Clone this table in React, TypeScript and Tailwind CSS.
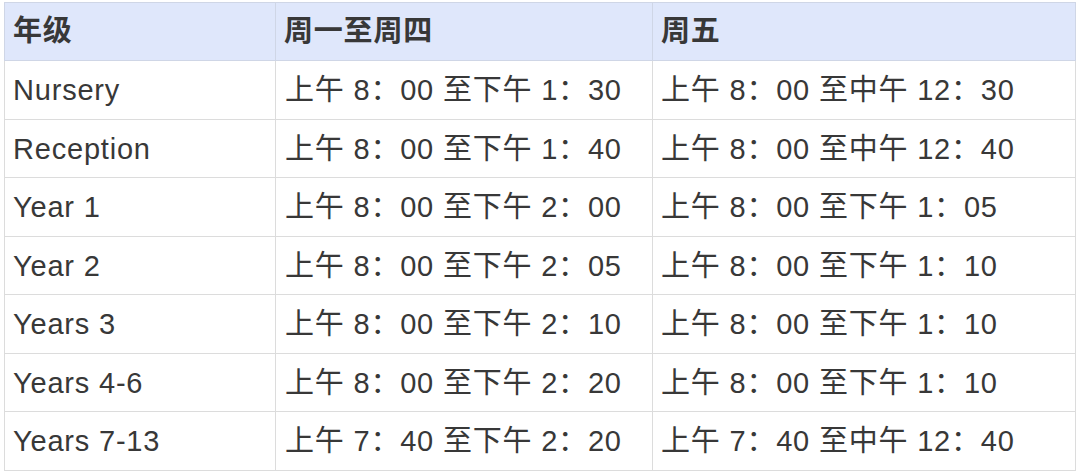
const rows = [
  ["Nursery", "上午 8：00 至下午 1：30", "上午 8：00 至中午 12：30"],
  ["Reception", "上午 8：00 至下午 1：40", "上午 8：00 至中午 12：40"],
  ["Year 1", "上午 8：00 至下午 2：00", "上午 8：00 至下午 1：05"],
  ["Year 2", "上午 8：00 至下午 2：05", "上午 8：00 至下午 1：10"],
  ["Years 3", "上午 8：00 至下午 2：10", "上午 8：00 至下午 1：10"],
  ["Years 4-6", "上午 8：00 至下午 2：20", "上午 8：00 至下午 1：10"],
  ["Years 7-13", "上午 7：40 至下午 2：20", "上午 7：40 至中午 12：40"],
];

export default function App() {
  return (
    <div
      className="w-[1080px] h-[474px] bg-white pl-[4px] pt-[2px] overflow-hidden"
      style={{ fontFamily: '"Liberation Sans", "Noto Sans CJK SC", sans-serif' }}
    >
      <table className="w-[1071px] border-collapse table-fixed text-[29px] tracking-[0.8px] text-[#383838]">
        <colgroup>
          <col className="w-[271px]" />
          <col className="w-[377px]" />
          <col className="w-[423px]" />
        </colgroup>
        <thead>
          <tr className="bg-[#dfe7fb]">
            <th className="h-[58px] border border-[#cfd6e6] pl-[8px] pt-[1px] text-left font-bold">年级</th>
            <th className="h-[58px] border border-[#cfd6e6] pl-[8px] pt-[1px] text-left font-bold">周一至周四</th>
            <th className="h-[58px] border border-[#cfd6e6] pl-[8px] pt-[1px] text-left font-bold">周五</th>
          </tr>
        </thead>
        <tbody>
          {rows.map((r, i) => (
            <tr key={i}>
              <td className="h-[58.5px] border border-[#dcdcdc] pl-[8px] pt-[2px] whitespace-nowrap">{r[0]}</td>
              <td className="h-[58.5px] border border-[#dcdcdc] pl-[9px] pt-[2px] whitespace-nowrap">{r[1]}</td>
              <td className="h-[58.5px] border border-[#dcdcdc] pl-[8px] pt-[2px] whitespace-nowrap">{r[2]}</td>
            </tr>
          ))}
        </tbody>
      </table>
    </div>
  );
}
